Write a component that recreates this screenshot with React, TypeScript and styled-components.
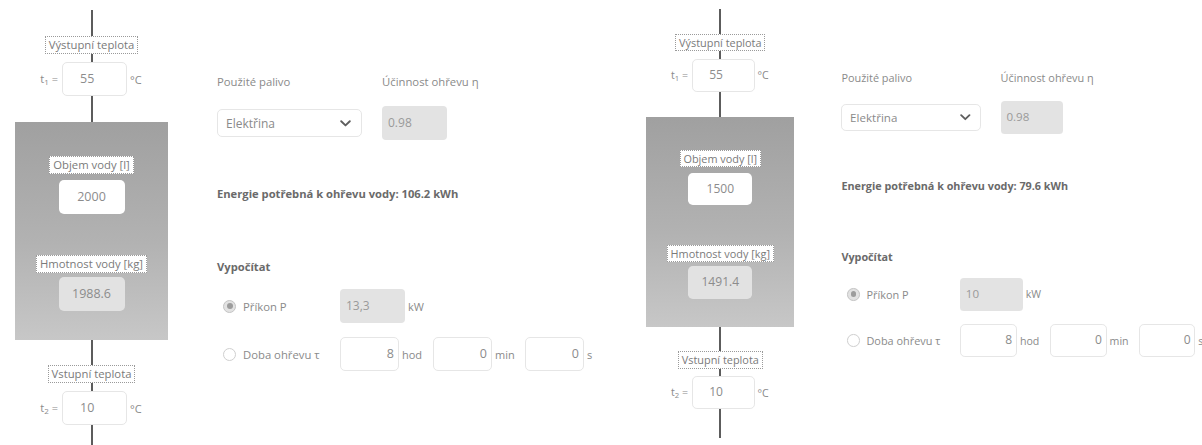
import React from "react";
import styled, { createGlobalStyle } from "styled-components";

const GlobalStyle = createGlobalStyle`
  html, body { margin: 0; padding: 0; background: #ffffff; }
  body { font-family: "Open Sans", "Liberation Sans", sans-serif; }
  * { box-sizing: border-box; }
`;

const Page = styled.div`
  display: flex;
  align-items: flex-start;
  width: 1202px;
  height: 445px;
  overflow: hidden;
  background: #ffffff;
`;

const Panel = styled.div<{ $scale: number; $width?: number; $shiftY?: number }>`
  display: flex;
  align-items: flex-start;
  flex: none;
  width: ${(p) => (p.$width ? `${p.$width}px` : "auto")};
  padding: 10px 0 0 15px;
  margin-top: ${(p) => p.$shiftY ?? 0}px;
  zoom: ${(p) => p.$scale};
`;

const Column = styled.div`
  display: flex;
  flex-direction: column;
  align-items: center;
  width: 153px;
  flex: none;
  & > * { flex-shrink: 0; }
`;

const Connector = styled.div<{ $h: number }>`
  width: 2px;
  height: ${(p) => p.$h}px;
  background: #5c5c5c;
`;

const Tag = styled.div`
  height: 18px;
  padding: 0 3px;
  background: #ffffff;
  border: 1px dotted #9a9a9a;
  color: #7a7a7a;
  font-size: 11.3px;
  line-height: 16px;
  white-space: nowrap;
`;

const TempRow = styled.div`
  display: grid;
  grid-template-columns: 47px 65px 1fr;
  align-items: center;
  width: 100%;
`;

const TempSymbol = styled.span`
  justify-self: end;
  padding-right: 4px;
  font-size: 11px;
  color: #8a8a8a;
  white-space: nowrap;
  sub { font-size: 8px; vertical-align: -2px; }
`;

const TempUnit = styled.span`
  padding-left: 3px;
  font-size: 11px;
  color: #8a8a8a;
`;

const TempBox = styled.div`
  height: 34px;
  border: 1px solid #e6e6e6;
  border-radius: 5px;
  background: #ffffff;
  color: #8c8c8c;
  font-size: 12.5px;
  line-height: 32px;
  padding-left: 17px;
`;

const Tank = styled.div`
  display: flex;
  flex-direction: column;
  align-items: center;
  width: 153px;
  height: 218px;
  padding-top: 34px;
  background: linear-gradient(180deg, #a0a0a0 0%, #b2b2b2 55%, #c7c7c7 100%);
`;

const TankBox = styled.div<{ $readonly?: boolean; $mt: number }>`
  width: 66px;
  height: 34px;
  margin-top: ${(p) => p.$mt}px;
  border-radius: 5px;
  background: ${(p) => (p.$readonly ? "#e2e2e2" : "#ffffff")};
  color: #8c8c8c;
  font-size: 12.5px;
  line-height: 34px;
  text-align: center;
`;

const TankTag = styled(Tag)<{ $mt?: number }>`
  margin-top: ${(p) => p.$mt ?? 0}px;
`;

const Form = styled.div`
  display: flex;
  flex-direction: column;
  padding: 65px 0 0 49px;
  flex: none;
`;

const FuelGrid = styled.div`
  display: grid;
  grid-template-columns: 145px 65px;
  column-gap: 20px;
  row-gap: 17px;
  align-items: center;
`;

const FieldLabel = styled.div`
  font-size: 11.3px;
  line-height: 14px;
  color: #8a8a8a;
  white-space: nowrap;
`;

const Select = styled.div`
  display: flex;
  align-items: center;
  justify-content: space-between;
  height: 28px;
  padding: 0 10px 0 8px;
  border: 1px solid #e6e6e6;
  border-radius: 5px;
  background: #ffffff;
  color: #8a8a8a;
  font-size: 12px;
`;

const ReadBox = styled.div<{ $w: number }>`
  width: ${(p) => p.$w}px;
  height: 34px;
  border-radius: 4px;
  background: #e3e3e3;
  color: #9a9a9a;
  font-size: 12px;
  line-height: 34px;
  padding-left: 6px;
  flex: none;
`;

const Strong = styled.div<{ $mt: number }>`
  margin-top: ${(p) => p.$mt}px;
  font-size: 11.2px;
  line-height: 14px;
  font-weight: 700;
  color: #6a6a6a;
  white-space: nowrap;
`;

const OptionRow = styled.div<{ $mt: number }>`
  display: flex;
  align-items: center;
  margin-top: ${(p) => p.$mt}px;
  height: 34px;
`;

const Radio = styled.span<{ $checked?: boolean }>`
  display: inline-flex;
  align-items: center;
  justify-content: center;
  width: 13px;
  height: 13px;
  margin-left: 6px;
  border-radius: 50%;
  border: 1px solid ${(p) => (p.$checked ? "#c4c4c4" : "#cfcfcf")};
  background: ${(p) => (p.$checked ? "#e2e2e2" : "#ffffff")};
  flex: none;
  &::after {
    content: "";
    display: ${(p) => (p.$checked ? "block" : "none")};
    width: 6px;
    height: 6px;
    border-radius: 50%;
    background: #9c9c9c;
  }
`;

const OptionLabel = styled.span`
  width: 104px;
  padding-left: 7px;
  font-size: 11.3px;
  color: #8a8a8a;
  white-space: nowrap;
  flex: none;
`;

const NumBox = styled.div`
  width: 59px;
  height: 34px;
  border: 1px solid #e6e6e6;
  border-radius: 5px;
  background: #ffffff;
  color: #8c8c8c;
  font-size: 12.5px;
  line-height: 32px;
  text-align: right;
  padding-right: 4px;
  flex: none;
`;

const Unit = styled.span<{ $w: number }>`
  width: ${(p) => p.$w}px;
  padding-left: 3px;
  font-size: 11px;
  color: #8a8a8a;
  flex: none;
`;

const Chevron = () => (
  <svg width="11" height="7" viewBox="0 0 11 7">
    <path d="M1.2 1.2 L5.5 5.4 L9.8 1.2" fill="none" stroke="#5e5e5e" strokeWidth="1.9" strokeLinecap="round" strokeLinejoin="round" />
  </svg>
);

type CalcProps = {
  volume: string;
  mass: string;
  energy: string;
  power: string;
};

const Calculator = ({ volume, mass, energy, power }: CalcProps) => (
  <>
    <Column>
      <Connector $h={26} />
      <Tag>Výstupní teplota</Tag>
      <Connector $h={8} />
      <TempRow>
        <TempSymbol>
          t<sub>1</sub> =
        </TempSymbol>
        <TempBox>55</TempBox>
        <TempUnit>°C</TempUnit>
      </TempRow>
      <Connector $h={26} />
      <Tank>
        <TankTag>Objem vody [l]</TankTag>
        <TankBox $mt={6}>{volume}</TankBox>
        <TankTag $mt={41}>Hmotnost vody [kg]</TankTag>
        <TankBox $mt={4} $readonly>
          {mass}
        </TankBox>
      </Tank>
      <Connector $h={25} />
      <Tag>Vstupní teplota</Tag>
      <Connector $h={8} />
      <TempRow>
        <TempSymbol>
          t<sub>2</sub> =
        </TempSymbol>
        <TempBox>10</TempBox>
        <TempUnit>°C</TempUnit>
      </TempRow>
      <Connector $h={30} />
    </Column>
    <Form>
      <FuelGrid>
        <FieldLabel>Použité palivo</FieldLabel>
        <FieldLabel>Účinnost ohřevu η</FieldLabel>
        <Select>
          <span>Elektřina</span>
          <Chevron />
        </Select>
        <ReadBox $w={65}>0.98</ReadBox>
      </FuelGrid>
      <Strong $mt={47}>Energie potřebná k ohřevu vody: {energy} kWh</Strong>
      <Strong $mt={59}>Vypočítat</Strong>
      <OptionRow $mt={15}>
        <Radio $checked />
        <OptionLabel>Příkon P</OptionLabel>
        <ReadBox $w={65}>{power}</ReadBox>
        <Unit $w={30}>kW</Unit>
      </OptionRow>
      <OptionRow $mt={14}>
        <Radio />
        <OptionLabel>Doba ohřevu τ</OptionLabel>
        <NumBox>8</NumBox>
        <Unit $w={34}>hod</Unit>
        <NumBox>0</NumBox>
        <Unit $w={33}>min</Unit>
        <NumBox>0</NumBox>
        <Unit $w={20}>s</Unit>
      </OptionRow>
    </Form>
  </>
);

export default function App() {
  return (
    <>
      <GlobalStyle />
      <Page>
        <Panel $scale={1} $width={632}>
          <Calculator volume="2000" mass="1988.6" energy="106.2" power="13,3" />
        </Panel>
        <Panel $scale={0.965} $shiftY={-1}>
          <Calculator volume="1500" mass="1491.4" energy="79.6" power="10" />
        </Panel>
      </Page>
    </>
  );
}
